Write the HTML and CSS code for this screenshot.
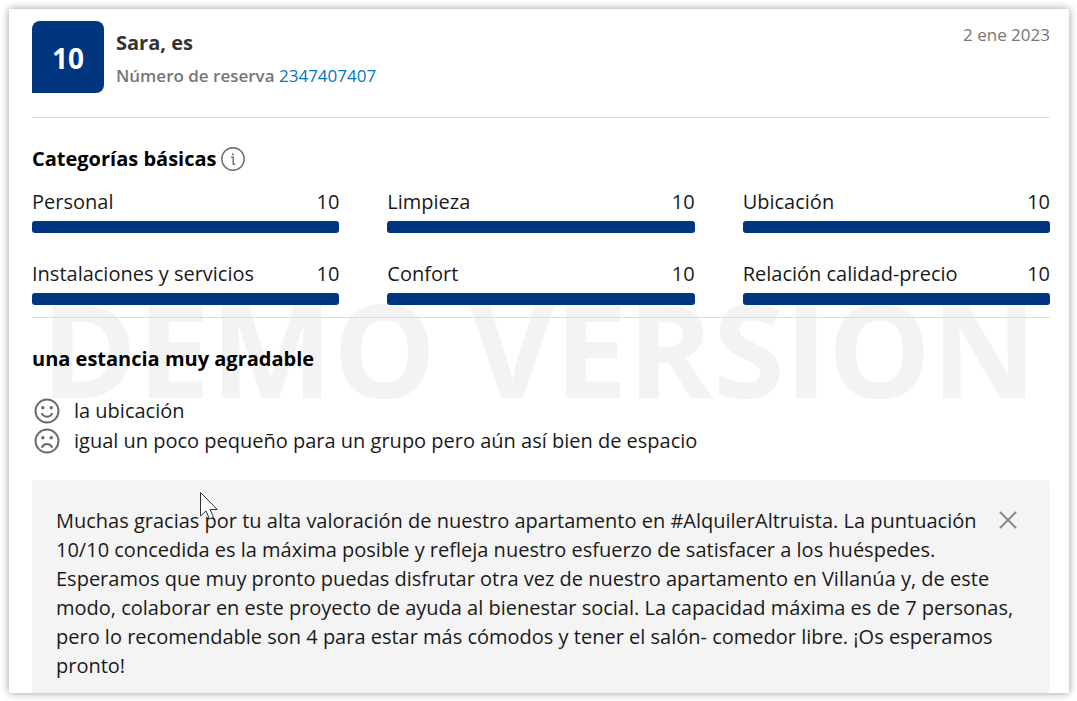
FILE: index.html
```html
<!DOCTYPE html>
<html lang="es">
<head>
    <meta charset="UTF-8">
    <meta name="viewport" content="width=device-width, initial-scale=1.0">
    <title>Comentario de Sara</title>
    <link rel="stylesheet" href="styles.css">
</head>
<body>
    <main class="card">
        <div class="watermark" aria-hidden="true">DEMO VERSION</div>

        <header class="header">
            <div class="badge">10</div>
            <div class="guest">
                <div class="guest-name">Sara, es</div>
                <div class="booking"><span class="booking-label">Número de reserva</span> <a href="#">2347407407</a></div>
            </div>
            <div class="date">2 ene 2023</div>
        </header>

        <section class="categories">
            <h2 class="title">Categorías básicas
                <svg class="info" viewBox="0 0 24 24" fill="none" stroke="#6b6b6b">
                    <circle cx="12" cy="12" r="11.2" stroke-width="1.4"/>
                    <path d="M10.2 10.2h2v6.2c0 .5.3.8.8.8h1.2" stroke-width="1.4"/>
                    <circle cx="12" cy="7.2" r="1" fill="#6b6b6b" stroke="none"/>
                </svg>
            </h2>
            <div class="scores">
                <div class="score">
                    <div class="score-text"><span>Personal</span><span>10</span></div>
                    <div class="bar"></div>
                </div>
                <div class="score">
                    <div class="score-text"><span>Limpieza</span><span>10</span></div>
                    <div class="bar"></div>
                </div>
                <div class="score">
                    <div class="score-text"><span>Ubicación</span><span>10</span></div>
                    <div class="bar"></div>
                </div>
                <div class="score">
                    <div class="score-text"><span>Instalaciones y servicios</span><span>10</span></div>
                    <div class="bar"></div>
                </div>
                <div class="score">
                    <div class="score-text"><span>Confort</span><span>10</span></div>
                    <div class="bar"></div>
                </div>
                <div class="score">
                    <div class="score-text"><span>Relación calidad-precio</span><span>10</span></div>
                    <div class="bar"></div>
                </div>
            </div>
        </section>

        <section class="review">
            <h2 class="title">una estancia muy agradable</h2>
            <div class="comment">
                <svg class="face" viewBox="0 0 26 26" fill="none" stroke="#6b6b6b" stroke-width="2">
                    <circle cx="13" cy="13" r="11.5"/>
                    <path d="M8 15.8c1.2 2 3 3 5 3s3.8-1 5-3" stroke-linecap="round"/>
                    <circle cx="8.8" cy="9.8" r="1.7" fill="#6b6b6b" stroke="none"/>
                    <circle cx="17.2" cy="9.8" r="1.7" fill="#6b6b6b" stroke="none"/>
                </svg>
                <span>la ubicación</span>
            </div>
            <div class="comment">
                <svg class="face" viewBox="0 0 26 26" fill="none" stroke="#6b6b6b" stroke-width="2">
                    <circle cx="13" cy="13" r="11.5"/>
                    <path d="M8 19c1.2-2 3-3 5-3s3.8 1 5 3" stroke-linecap="round"/>
                    <circle cx="8.8" cy="9.8" r="1.7" fill="#6b6b6b" stroke="none"/>
                    <circle cx="17.2" cy="9.8" r="1.7" fill="#6b6b6b" stroke="none"/>
                </svg>
                <span>igual un poco pequeño para un grupo pero aún así bien de espacio</span>
            </div>
        </section>

        <section class="reply">
            <button class="close" type="button" aria-label="Cerrar">
                <svg viewBox="0 0 18 18" fill="none" stroke="#8a8a8a" stroke-width="2" stroke-linecap="round">
                    <path d="M1.5 1.5l15 15M16.5 1.5l-15 15"/>
                </svg>
            </button>
            <p>Muchas gracias por tu alta valoración de nuestro apartamento en #AlquilerAltruista. La puntuación 10/10 concedida es la máxima posible y refleja nuestro esfuerzo de satisfacer a los huéspedes. Esperamos que muy pronto puedas disfrutar otra vez de nuestro apartamento en Villanúa y, de este modo, colaborar en este proyecto de ayuda al bienestar social. La capacidad máxima es de 7 personas, pero lo recomendable son 4 para estar más cómodos y tener el salón- comedor libre. ¡Os esperamos pronto!</p>
            <svg class="cursor" viewBox="0 0 20 30" fill="#fff" stroke="#333">
                <path d="M1.5 1.5v23.5l5.5-5 3.5 8 4-1.8-3.5-7.7h7.2z"/>
            </svg>
        </section>
    </main>
</body>
</html>
```
FILE: styles.css
```css
* { box-sizing: border-box; }
body {
    background-color: #fff;
    color: #1a1a1a;
    font-family: 'Open Sans', 'Noto Sans', sans-serif;
    font-size: 20px;
    line-height: 30px;
    margin: 0;
    padding: 9px 8px 8px 9px;
}
.card {
    position: relative;
    background-color: #fff;
    padding: 12px 19px 0 23px;
    box-shadow: 0 0 8px rgba(0, 0, 0, 0.4);
}
.watermark {
    position: absolute;
    top: 259px;
    left: 0;
    right: 0;
    color: #f3f3f3;
    font-size: 130px;
    font-weight: bold;
    line-height: 160px;
    text-align: center;
    white-space: nowrap;
}
.header, .categories, .review, .reply { position: relative; }
.header {
    display: flex;
    gap: 12px;
    height: 97px;
    border-bottom: 1px solid #ddd;
}
.badge {
    width: 72px;
    height: 72px;
    background-color: #00357f;
    border-radius: 8px 8px 8px 0;
    color: #fff;
    font-size: 28px;
    font-weight: bold;
    line-height: 74px;
    text-align: center;
}
.guest { flex: 1; padding-top: 6px; }
.guest-name { color: #333; font-weight: bold; line-height: 32px; }
.booking { font-size: 17px; line-height: 34px; }
.booking-label { color: #767676; font-weight: 600; }
.booking a { color: #0077bd; text-decoration: none; }
.date { color: #767676; font-size: 17px; line-height: 28px; }
.title {
    display: flex;
    align-items: center;
    gap: 4px;
    margin: 0;
    color: #000;
    font-size: 20px;
    font-weight: bold;
    line-height: 30px;
}
.info { width: 24px; height: 24px; }
.categories {
    padding: 26px 0 12px;
    border-bottom: 1px solid #ddd;
}
.scores {
    display: grid;
    grid-template-columns: repeat(3, 1fr);
    gap: 24px 48px;
    padding-top: 11px;
}
.score-text { display: flex; justify-content: space-between; height: 36px; line-height: 34px; }
.bar { height: 12px; background-color: #00357f; border-radius: 3px; }
.review { padding: 26px 0 24px; }
.review .title { margin-bottom: 22px; }
.comment { display: flex; align-items: center; gap: 14px; padding-left: 2px; }
.face { width: 26px; height: 26px; }
.reply {
    padding: 26px 24px 13px;
    background-color: #f4f4f4;
    border-radius: 4px 4px 0 0;
    line-height: 29px;
}
.reply p { margin: 0; }
.close {
    float: right;
    width: 36px;
    height: 28px;
    margin-left: 12px;
    padding: 0;
    background: none;
    border: none;
    cursor: pointer;
}
.close svg { width: 18px; height: 18px; vertical-align: middle; }
.cursor {
    position: absolute;
    top: 11px;
    left: 167px;
    width: 20px;
    height: 30px;
}
```
